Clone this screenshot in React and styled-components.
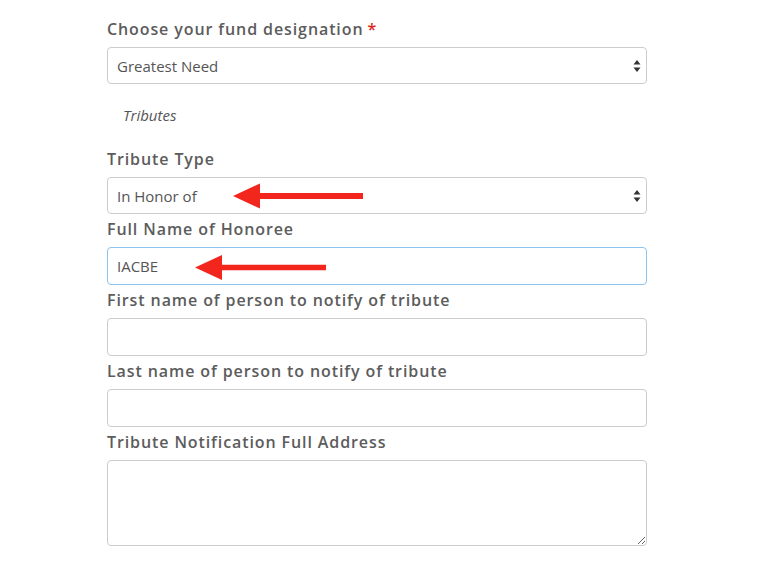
import styled, { createGlobalStyle } from "styled-components";

const Global = createGlobalStyle`
  html, body { margin: 0; padding: 0; background: #fff; }
  body { font-family: "Open Sans", "Liberation Sans", sans-serif; }
`;

const Page = styled.div`
  position: relative;
  width: 540px;
  padding: 14px 0 0 107px;
`;

const Label = styled.label`
  display: block;
  margin: 3px 0 6px;
  line-height: 24px;
  font-size: 16px;
  font-weight: 600;
  letter-spacing: 0.9px;
  color: #5c5c5c;
`;

const Required = styled.span`
  color: #e0261b;
  margin-left: 4px;
`;

const Box = styled.div`
  position: relative;
  box-sizing: border-box;
  height: ${(p) => p.$h}px;
  border: 1px solid ${(p) => (p.$focus ? "#8cc3ef" : "#cccccc")};
  border-radius: 4px;
  padding: 0 9px;
  display: flex;
  align-items: center;
  font-size: 15px;
  color: #555;
  background: #fff;
`;

const Area = styled.textarea`
  display: block;
  box-sizing: border-box;
  width: 100%;
  height: 86px;
  border: 1px solid #cccccc;
  border-radius: 4px;
  margin: 0;
  font-family: inherit;
  outline: none;
`;

const Caret = styled.svg`
  position: absolute;
  right: 5px;
  top: 50%;
  margin-top: -7px;
`;

const Section = styled.div`
  margin: 21px 0 22px 16px;
  line-height: 20px;
  font-size: 15px;
  font-style: italic;
  color: #555;
`;

const Arrow = styled.svg`
  position: absolute;
  left: 0;
  top: 0;
  pointer-events: none;
`;

function Select({ value }) {
  return (
    <Box $h={37}>
      {value}
      <Caret width="8" height="14" viewBox="0 0 8 14">
        <path d="M4 1 L7.5 5.5 H0.5 Z M4 13 L7.5 8.5 H0.5 Z" fill="#333" />
      </Caret>
    </Box>
  );
}

export default function App() {
  return (
    <>
      <Global />
      <Page>
        <Label>
          Choose your fund designation<Required>*</Required>
        </Label>
        <Select value="Greatest Need" />
        <Section>Tributes</Section>
        <Label>Tribute Type</Label>
        <Select value="In Honor of" />
        <Label>Full Name of Honoree</Label>
        <Box $h={38} $focus>IACBE</Box>
        <Label>First name of person to notify of tribute</Label>
        <Box $h={38} />
        <Label>Last name of person to notify of tribute</Label>
        <Box $h={38} />
        <Label>Tribute Notification Full Address</Label>
        <Area />
      </Page>
      <Arrow width="768" height="581">
        <path d="M233 196 L260 183.5 L260 193 L363 193 L363 199 L260 199 L260 208.5 Z" fill="#f2261c" />
        <path d="M195 267.5 L222 255 L222 264.7 L326 264.7 L326 270.3 L222 270.3 L222 280 Z" fill="#f2261c" />
      </Arrow>
    </>
  );
}
